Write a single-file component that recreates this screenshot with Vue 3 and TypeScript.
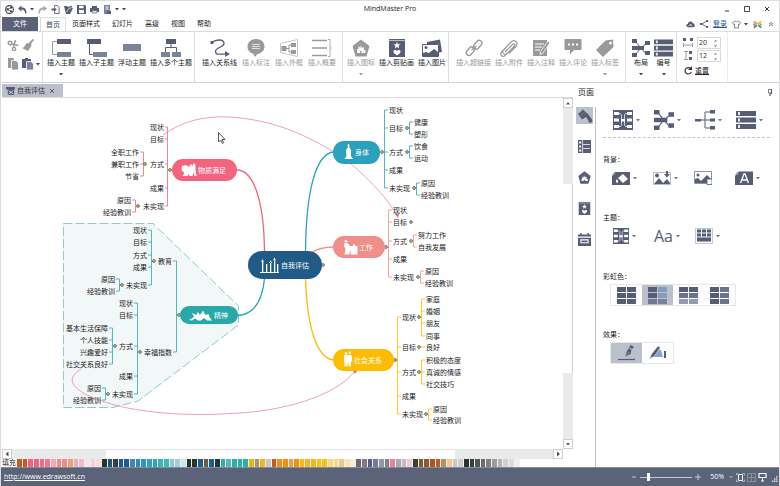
<script setup lang="ts">
import { ref } from 'vue'

interface RibbonItem { icon: string; label: string; w: number; off?: boolean; caret?: boolean }
interface Branch {
  color: string
  dot: [number, number]
  trunk: number
  text: number
  items: [string, number][]
}

const menus = ['页面样式', '幻灯片', '高级', '视图', '帮助']

const groups: { id: string; items: RibbonItem[] }[] = [
  { id: 'topic', items: [
    { icon: 'topic', label: '插入主题', w: 21, caret: true },
    { icon: 'subtopic', label: '插入子主题', w: 20 },
    { icon: 'floating', label: '浮动主题', w: 20 },
    { icon: 'multi', label: '插入多个主题', w: 20 },
  ] },
  { id: 'mark', items: [
    { icon: 'relation', label: '插入关系线', w: 20 },
    { icon: 'callout', label: '插入标注', w: 18, off: true },
    { icon: 'boundary', label: '插入外框', w: 18, off: true },
    { icon: 'summary', label: '插入概要', w: 20, off: true },
  ] },
  { id: 'image', items: [
    { icon: 'marker', label: '插入图标', w: 18, off: true, caret: true },
    { icon: 'clipart', label: '插入剪贴画', w: 18 },
    { icon: 'picture', label: '插入图片', w: 20 },
  ] },
  { id: 'attach', items: [
    { icon: 'link', label: '插入超链接', w: 18, off: true },
    { icon: 'clip', label: '插入附件', w: 18, off: true },
    { icon: 'note', label: '插入注释', w: 18, off: true },
    { icon: 'review', label: '插入评论', w: 18, off: true },
    { icon: 'tag', label: '插入标签', w: 18, off: true, caret: true },
  ] },
  { id: 'arrange', items: [
    { icon: 'layout', label: '布局', w: 18, caret: true },
    { icon: 'numbering', label: '编号', w: 19, caret: true },
  ] },
]

const hGap = ref(20)
const vGap = ref(12)
const zoom = ref(14)

const PINK = '#f26580'
const TEAL = '#2ba8ab'
const BLUE = '#2ba1be'
const SALMON = '#f08e89'
const GOLD = '#fbbc05'

const branches: Branch[] = [
  { color: PINK, dot: [170, 170], trunk: 167.5, text: 164, items: [['现状', 127], ['目标', 139], ['方式', 164], ['成果', 188], ['未实现', 206]] },
  { color: PINK, dot: [145, 164], trunk: 143.5, text: 139, items: [['全职工作', 152], ['兼职工作', 164], ['节省', 176]] },
  { color: PINK, dot: [138, 206], trunk: 135.5, text: 131, items: [['原因', 200], ['经验教训', 212]] },
  { color: TEAL, dot: [179, 315], trunk: 176.5, text: 172, items: [['教育', 261], ['幸福指数', 352]] },
  { color: TEAL, dot: [154, 261], trunk: 151.5, text: 147, items: [['现状', 230], ['目标', 242], ['方式', 255], ['成果', 267], ['未实现', 285]] },
  { color: TEAL, dot: [122, 285], trunk: 119.5, text: 115, items: [['原因', 279], ['经验教训', 291]] },
  { color: TEAL, dot: [140, 352], trunk: 137.5, text: 133, items: [['现状', 303], ['目标', 315], ['方式', 346], ['成果', 376], ['未实现', 394]] },
  { color: TEAL, dot: [115, 346], trunk: 112.5, text: 108, items: [['基本生活保障', 328], ['个人技能', 340], ['兴趣爱好', 352], ['社交关系良好', 364]] },
  { color: TEAL, dot: [108, 394], trunk: 105.5, text: 101, items: [['原因', 388], ['经验教训', 400]] },
  { color: BLUE, dot: [382, 152], trunk: 384.5, text: 389, items: [['现状', 110], ['目标', 128], ['方式', 152], ['成果', 170], ['未实现', 188]] },
  { color: BLUE, dot: [407, 128], trunk: 409.5, text: 414, items: [['健康', 122], ['塑形', 134]] },
  { color: BLUE, dot: [407, 152], trunk: 409.5, text: 414, items: [['饮食', 146], ['运动', 158]] },
  { color: BLUE, dot: [414, 188], trunk: 416.5, text: 421, items: [['原因', 183], ['经验教训', 195]] },
  { color: SALMON, dot: [386, 247], trunk: 388.5, text: 393, items: [['现状', 210], ['目标', 222], ['方式', 241], ['成果', 259], ['未实现', 277]] },
  { color: SALMON, dot: [411, 241], trunk: 413.5, text: 418, items: [['努力工作', 235], ['自我发展', 247]] },
  { color: SALMON, dot: [418, 277], trunk: 420.5, text: 425, items: [['原因', 271], ['经验教训', 283]] },
  { color: GOLD, dot: [395, 360], trunk: 397.5, text: 402, items: [['现状', 317], ['目标', 347], ['方式', 372], ['成果', 396], ['未实现', 414]] },
  { color: GOLD, dot: [419, 317], trunk: 421.5, text: 426, items: [['家庭', 299], ['婚姻', 311], ['朋友', 323], ['同事', 336]] },
  { color: GOLD, dot: [419, 347], trunk: 421.5, text: 426, items: [['良好', 347]] },
  { color: GOLD, dot: [419, 372], trunk: 421.5, text: 426, items: [['积极的态度', 360], ['真诚的情感', 372], ['社交技巧', 384]] },
  { color: GOLD, dot: [426, 414], trunk: 428.5, text: 433, items: [['原因', 409], ['经验教训', 420]] },
]

function wires(b: Branch): string {
  const dir = b.text > b.trunk ? 1 : -1
  const ys = b.items.map(i => i[1])
  const top = Math.min(...ys, b.dot[1])
  const bottom = Math.max(...ys, b.dot[1])
  const stubs = ys.map(y => `M${b.trunk} ${y}H${b.text - dir}`).join('')
  return `M${b.trunk} ${top}V${bottom}M${b.dot[0]} ${b.dot[1]}H${b.trunk}${stubs}`
}

const swatches = ('c85a1e c85a1e f0647d f0647d ef6a85 ef7593 f3aab3 f08c82 f08c82 eda07e f5a9b8 f2b8cc e9e9e9 f5d0d6 f3dcda '
  + '24362f 1f5378 3a3c48 1f5b8c 1f5b8c 3f88b5 3a86b4 1f9cc4 3a9dc6 2aa3bd 36b4b9 3bb8ba 8fc8d4 a2cfd8 cce8ed '
  + '24362f 24362f 1c5f8c 6b6038 1c5f8c 24382f 28b0ab 58bab6 28b0ab 28b0ab 28b0ab e8b80c a89868 f0b428 c8c8c0 '
  + 'c8581e f09010 f09010 eda048 f09010 fcb808 f0b828 f0b828 fcc008 fcc008 fad880 fad888 eec890 fce4a8 fbead0 '
  + '6a6a72 857880 5c5c84 74789c 9498a4 808080 f08098 a8a8b0 c0bcc8 f4c8d8 404030 7c6030 945830 b05428 c8581e '
  + 'b09468 f4c890 c8c8c8 d0d0c8 24362f 3c3c40 505850 6a6a72 808080 9c9c9c b4b4b4 d0d0cc dcdedc eef0ee').split(' ')

const railTabs = [
  { icon: 'brush', name: '页面' },
  { icon: 'outline', name: '大纲' },
  { icon: 'marker', name: '图标' },
  { icon: 'clipart', name: '剪贴画' },
  { icon: 'calendar', name: '任务' },
]

const sections = [
  { title: '', cls: 'first', items: [['theme', 20, 1], ['layout', 20, 1], ['tree', 20, 1], ['numbering', 20, 1]] },
  { title: '背景：', cls: 'back', items: [['bgfill', 18, 1], ['bgpic', 18, 1], ['bgdel', 18, 0], ['watermark', 18, 1]] },
  { title: '主题：', cls: 'look', items: [['theme', 16, 1], ['fonts', 18, 1], ['colors', 18, 1]] },
] as { title: string; cls: string; items: [string, number, number][] }[]

const rainbow = [
  ['#565d75', '#565d75', '#565d75', '#565d75', '#565d75', '#565d75'],
  ['#565d75', '#879cbc', '#565d75', '#879cbc', '#707895', '#7a8296'],
  ['#565d75', '#565d75', '#6c7390', '#6c7390', '#909bb8', '#909bb8'],
  ['#565d75', '#6c7390', '#565d75', '#6c7390', '#565d75', '#6c7390'],
]
</script>

<template>
  <svg class="sprite" aria-hidden="true">
    <symbol id="topic" viewBox="0 0 21 18"><path d="M6 2.500H1.500V15.500H6" fill="none" stroke="#9a9da6" /><path d="M6 0h14v5H6z" fill="#565d75" /><path d="M6 13h14v5H6z" fill="#7a839c" /></symbol>
    <symbol id="subtopic" viewBox="0 0 20 18"><path d="M2.500 5V15.500H6" fill="none" stroke="#565d75" /><path d="M0 0h14v5H0z" fill="#565d75" /><path d="M6 13h14v5H6z" fill="#7a839c" /></symbol>
    <symbol id="floating" viewBox="0 0 20 18"><path d="M1 5h18v7H1z" fill="#7a839c" /></symbol>
    <symbol id="multi" viewBox="0 0 20 18"><path d="M10 5V8.500M4.500 13V8.500H15.500V13" fill="none" stroke="#565d75" /><path d="M5 0h10v5H5z" fill="#565d75" /><path d="M0 13h9v5H0zM11 13h9v5h-9z" fill="#7a839c" /></symbol>
    <symbol id="relation" viewBox="0 0 20 18"><circle cx="2" cy="3.500" r="1.700" fill="#565d75" /><path d="M2 3.500C6 0 14 0 14 4.500C14 8.500 5.500 8 5.500 12.500C5.500 17 12 14.500 17 15" fill="none" stroke="#565d75" stroke-width="1.300" /><path d="M15 12l5 3-5 3z" fill="#565d75" /></symbol>
    <symbol id="callout" viewBox="0 0 18 18"><path d="M9 0C14 0 17.500 3 17.500 7.500S14 14.500 10.500 15L8 18L6 14.500C3 14 .5 11.500 .5 7.500S4 0 9 0z" fill="#98999b" /><path d="M5 5.500h8M5 7.500h8M5 9.500h8" stroke="#fff" stroke-width=".7" /></symbol>
    <symbol id="boundary" viewBox="0 0 18 18"><path d="M.5 4.500L17.500 .5V17.500L.5 13.500z" fill="none" stroke="#c3c4c6" /><path d="M1.500 7h5v5h-5zM11 4h5v4h-5zM11 11h5v4h-5z" fill="#98999b" /><path d="M6 9.500H9M11 6H9V13H11" fill="none" stroke="#98999b" /></symbol>
    <symbol id="summary" viewBox="0 0 20 18"><path d="M0 1.500H15M0 9H15M0 16.500H15" stroke="#98999b" stroke-width="1.500" /><path d="M16 .5h2V8l1.500 1L18 10v7.500h-2" fill="none" stroke="#98999b" stroke-width=".8" /></symbol>
    <symbol id="marker" viewBox="0 0 18 18"><path d="M9 .5L17.500 7L14.500 17.500H3.500L.5 7z" fill="currentColor" /><path d="M5 14V10h1.500v-3l2 2V6l1.500 3l2-1v3h1.500v3z" fill="#fff" /><path d="M8 14v-2h1.500v2z" fill="currentColor" /></symbol>
    <symbol id="clipart" viewBox="0 0 18 18"><path d="M1 0h16v18H1z" fill="currentColor" /><path d="M1 1.500h16" stroke="#fff" stroke-width=".6" /><path d="M9 3l1 2.200 2.500.2-2 1.600.7 2.400L9 8.100 6.800 9.400l.7-2.400-2-1.600 2.500-.2zM9 16.500c-2-1.200-3.500-2.200-3.500-4 0-1.600 2.500-2 3.500-.4 1-1.600 3.500-1.200 3.500.4 0 1.800-1.500 2.800-3.500 4z" fill="#fff" /></symbol>
    <symbol id="picture" viewBox="0 0 20 18"><path d="M5 3L18 .5L20 13L17 13.500V5H5z" fill="#565d75" /><path d="M.5 5.500H16.500V17.500H.5z" fill="#fff" stroke="#565d75" /><circle cx="4" cy="8.500" r="1.500" fill="#565d75" /><path d="M1 17v-3l3-1 3 1 5-4 4 3v4z" fill="#565d75" /></symbol>
    <symbol id="link" viewBox="0 0 18 18"><g fill="none" stroke="#98999b" stroke-width="1.400"><rect x="8" y="3" width="9.500" height="5.500" rx="2.700" transform="rotate(-50 12.700 5.700)" /><rect x=".5" y="9.500" width="9.500" height="5.500" rx="2.700" transform="rotate(-50 5.200 12.200)" /><path d="M6.500 11l5-4" /></g></symbol>
    <symbol id="clip" viewBox="0 0 18 18"><path d="M5 13L12.500 5.500c1.500-1.500 3 .5 1.800 1.800L7 14.500c-2.500 2.500-6-1-3.500-3.500L11 3c3.500-3.500 8 1 4.800 4.500L9 14.500M3.500 11L1.500 13c-2 3 .5 5 3 4l2.500-2.500" fill="none" stroke="#98999b" stroke-width="1.200" /></symbol>
    <symbol id="note" viewBox="0 0 18 18"><path d="M1 1h14v16H1z" fill="#98999b" /><path d="M3 5h9M3 8h7M3 11h5" stroke="#fff" /><path d="M16 2l2 1.500-7 10.500-3 1.500.5-3z" fill="#98999b" stroke="#fff" stroke-width=".8" /></symbol>
    <symbol id="review" viewBox="0 0 18 18"><path d="M1.500 0h15q1 0 1 1v9q0 1-1 1H10L6 15.500V11H1.500q-1 0-1-1V1q0-1 1-1z" fill="#98999b" /><path d="M4 4.500h2v2H4zM8 4.500h2v2H8zM12 4.500h2v2h-2z" fill="#fff" /></symbol>
    <symbol id="tag" viewBox="0 0 18 18"><path d="M9.500 1.500L17 .5L17.500 8L7 18L0 11z" fill="#98999b" /><circle cx="14.500" cy="4" r="1.500" fill="#fff" /></symbol>
    <symbol id="layout" viewBox="0 0 18 18"><path d="M3 2L15 16M15 4L9 9H5M3 16L9 9" fill="none" stroke="#565d75" /><path d="M0 0h5v4H0zM0 7h6v4H0zM0 14h5v4H0zM13 2h5v4h-5zM13 12h5v4h-5zM6 7h6v4H6z" fill="#565d75" /></symbol>
    <symbol id="numbering" viewBox="0 0 20 18"><path d="M0 0h20v5H0zM0 6.500h20v5H0zM0 13h20v5H0z" fill="#565d75" /><path d="M2 1h2v3H2zM2 7.500h2v3H2zM2 14h2v3H2z" fill="#e6e8ee" /></symbol>
    <symbol id="theme" viewBox="0 0 20 20"><path d="M0 0h20v20H0z" fill="#565d75" /><path d="M1 2h5v3H1zM1 8.500h5v3H1zM1 15h5v3H1zM14 2h5v3h-5zM14 8.500h5v3h-5zM14 15h5v3h-5zM8 9h4v2.500H8z" fill="#fff" /><path d="M6 3.500c3 0 2.500 1 2.500 6.500s.5 6.500-2.500 6.500M14 3.500c-3 0-2.500 1-2.500 6.500s-.5 6.500 2.500 6.500" fill="none" stroke="#fff" stroke-width=".8" /></symbol>
    <symbol id="tree" viewBox="0 0 20 20"><path d="M5 10H15M15 2H10V18H15" fill="none" stroke="#565d75" /><path d="M0 9h6v2.500H0zM15 0h5v3.500h-5zM15 8.500h5v3h-5zM15 16h5v3.500h-5z" fill="#565d75" /></symbol>
    <symbol id="bgfill" viewBox="0 0 18 14"><path d="M3.500 1H18V14H0V5z" fill="#565d75" /><path d="M0 4L3 0.500V4z" fill="#8d93a5" /><path d="M6 7l5-4 5 5-5 4z" fill="#fff" /><path d="M5 8q-2 2-.5 3.500T6 10z" fill="#fff" /></symbol>
    <symbol id="bgpic" viewBox="0 0 18 14"><path d="M.5 1.500H17.500V13.500H.5z" fill="none" stroke="#b8bcc8" /><circle cx="4" cy="4.500" r="2" fill="#565d75" /><path d="M1 13l5-6 4 5 4-4 3 4v1z" fill="#565d75" /><path d="M13 0v3h-2l3 3.500L17 3h-2V0z" fill="#565d75" /></symbol>
    <symbol id="bgdel" viewBox="0 0 18 14"><path d="M.5 .5H17.500V12.500H.5z" fill="#fff" stroke="#8d93a5" /><circle cx="4" cy="4" r="1.500" fill="#565d75" /><path d="M1 12V8l3-1 3 3 6-6 4 4v4z" fill="#565d75" /><path d="M13 8h5v5.500h-5z" fill="#fff" stroke="#565d75" stroke-width=".8" /></symbol>
    <symbol id="watermark" viewBox="0 0 18 14"><path d="M4 .5H18V14H0V5z" fill="#565d75" /><path d="M0 4L3.500 0V4z" fill="#8d93a5" /><path d="M5.500 12l3.500-9h1l3.500 9M7 9h5" fill="none" stroke="#fff" stroke-width="1.300" /></symbol>
    <symbol id="colors" viewBox="0 0 18 16"><path d="M.5 .5H17.500V15.500H.5z" fill="#f4f5f7" stroke="#c5c8d0" /><path d="M2 1.500h4v3H2zM7 1.500h4v3H7zM12 1.500h4v3h-4zM2 5.500h4v3H2zM7 5.500h4v3H7zM12 5.500h4v3h-4zM2 9.500h14v4H2z" fill="#565d75" /></symbol>
    <symbol id="brush" viewBox="0 0 16 16"><path d="M1 6L6 1.500L11 6L9 9L5 11.500zM9 8.500l2-2.500 4.500 6-1 2.500-2 .5z" fill="#565d75" /><path d="M3 8l5-4.500" stroke="#7a839c" stroke-width=".8" /></symbol>
    <symbol id="outline" viewBox="0 0 18 18"><path d="M0 0h18v18H0z" fill="#565d75" /><path d="M1.500 2h3v3h-3zM1.500 7.500h3v3h-3zM1.500 13h3v3h-3zM6.500 5.500h10v1h-10zM6.500 11.500h10v1h-10zM6 0h1v18H6z" fill="#fff" /></symbol>
    <symbol id="calendar" viewBox="0 0 18 18"><path d="M0 6.500h18V18H0zM0 2h3V0h2v2h8V0h2v2h3v3H0z" fill="#565d75" /><path d="M4 9.500h10v4H4z" fill="none" stroke="#fff" stroke-width="1.500" /></symbol>
    <symbol id="scissors" viewBox="0 0 12 12"><g fill="none" stroke="#98999b" stroke-width="1.400"><circle cx="3" cy="4" r="1.800" /><circle cx="7" cy="10" r="1.600" /><path d="M4.500 5L11.500 6.500M6.500 8.500L8.500 1" /></g></symbol>
    <symbol id="painter" viewBox="0 0 12 12"><path d="M10.500 0l1.500 1-3 4 .5 1.500L6 12 0 9c2-.5 3.500-2 4-4.500l3-.5z" fill="#98999b" /></symbol>
    <symbol id="copy" viewBox="0 0 12 12"><path d="M1 0h5l1 1v9H1z" fill="#98999b" /><path d="M4.500 2.500H9l2.500 2.500V12h-7z" fill="#98999b" stroke="#fff" stroke-width=".8" /></symbol>
    <symbol id="paste" viewBox="0 0 12 12"><path d="M0 1h3V0h3v1h3v9H0z" fill="#565d75" /><path d="M4.500 3.500H9L11.500 6v6h-7z" fill="#7a839c" stroke="#fff" stroke-width=".8" /></symbol>
    <symbol id="caret" viewBox="0 0 4 3"><path d="M0 0h4L2 2.500z" fill="currentColor" /></symbol>
    <symbol id="logo" viewBox="0 0 9 9"><circle cx="4.500" cy="4.500" r="3.900" fill="#fff" stroke="#3d4252" stroke-width="1.100" /><path d="M1.500 3.200h2.200v2.400H1.500zM5 1.800h2v1.700H5zM5 5.500h2v1.700H5z" fill="#3d4252" /><path d="M3 4.400l3-1.800M3 4.600l3 1.800" stroke="#3d4252" stroke-width=".6" /></symbol>
    <symbol id="undo" viewBox="0 0 9 9"><path d="M0 3.500L3.500 .5v2C7 2.500 8.500 4 8.500 8.500H7C7 5.500 6 4.500 3.500 4.500v2z" fill="currentColor" /></symbol>
    <symbol id="newdoc" viewBox="0 0 9 10"><path d="M3.500 .5h3l2 2v7h-5V7M3.500 3V.5" fill="none" stroke="#565d75" /><path d="M0 4h3V2.500L6 5 3 7.500V6H0z" fill="#565d75" /></symbol>
    <symbol id="open" viewBox="0 0 9 9"><path d="M0 1h3l1 1 4-1.500-.5 2L9 3 6 9H2z" fill="#565d75" /><path d="M2.500 7l3-4h2" stroke="#fff" stroke-width=".7" fill="none" /></symbol>
    <symbol id="save" viewBox="0 0 9 9"><path d="M0 0h8l1 1v8H0z" fill="#565d75" /><path d="M2 .8h4.500v2.500H2zM2 5h5v3.200H2z" fill="#fff" /></symbol>
    <symbol id="print" viewBox="0 0 9 9"><path d="M2 1h5v2h2v4H0V3h2z" fill="#565d75" /><path d="M2 5.500h5v2.500H2z" fill="#dfe1e8" stroke="#565d75" stroke-width=".6" /></symbol>
    <symbol id="export" viewBox="0 0 9 9"><path d="M1 0h6v9H1z" fill="#7a839c" /><path d="M2.500 2h3M2.500 4h3" stroke="#fff" /><path d="M4 6h4v3H4z" fill="#565d75" /></symbol>
    <symbol id="cloud" viewBox="0 0 10 8"><path d="M2.500 7C0 7-.5 4 2 3.500 2.500 0 7 0 7.500 2.500 10.500 3 10.500 7 8 7z" fill="#565d75" /><path d="M3 5h2V3.500L7 6" stroke="#fff" fill="none" stroke-width=".7" /></symbol>
    <symbol id="share" viewBox="0 0 8 8"><path d="M7 1L1.500 4L7 7" fill="none" stroke="#565d75" stroke-width=".9" /><path d="M6 0h2v2H6zM0 3h2v2H0zM6 6h2v2H6z" fill="#565d75" /></symbol>
    <symbol id="shirt" viewBox="0 0 9 8"><path d="M3 .5L.5 2l1 2 1-.5v4h4v-4l1 .5 1-2L6 .5Q4.500 2 3 .5z" fill="none" stroke="#565d75" stroke-width=".7" /></symbol>
    <symbol id="flower" viewBox="0 0 9 9"><g stroke-width="2.200" stroke-linecap="round"><path d="M4.500 4.500L1.500 2" stroke="#f5a623" /><path d="M4.500 4.500L7.500 2" stroke="#f5c623" /><path d="M4.500 4.500L1.500 7" stroke="#e94f64" /><path d="M4.500 4.500L7.500 7" stroke="#29a8d8" /><path d="M1.200 4.500h.1" stroke="#29b8b0" /><path d="M7.700 4.500h.1" stroke="#f08030" /></g><circle cx="4.500" cy="4.500" r="1" fill="#fff" /></symbol>
    <symbol id="doc" viewBox="0 0 10 10"><path d="M0 1h10v3H0zM2 4h7v6H2z" fill="#565d75" /><path d="M3 5l5 4M8 5L3 9" stroke="#fff" stroke-width=".8" /></symbol>
    <symbol id="pen" viewBox="0 0 18 16"><path d="M13 0l3 2-2 2-3-2zM11 3l2.500 2-1 4L7 12l2-6z" fill="#565d75" /><path d="M7 12l4-5" stroke="#bcc0cc" stroke-width=".6" /><path d="M0 14.500h17" stroke="#565d75" stroke-width="1.200" /></symbol>
    <symbol id="sketch" viewBox="0 0 18 16"><path d="M3 12C4 7 8 4 12 5l2 7z" fill="#86a5c8" /><path d="M9 1l2.500 1.500L5.500 11l-5 3 2-5z" fill="#565d75" stroke="#fff" stroke-width=".5" /><path d="M15 6h2v7h-2z" fill="#565d75" /></symbol>
  </svg>

  <div class="window">
    <header class="title">
      <div class="quick">
        <svg class="i9"><use href="#logo" /></svg>
        <button type="button" aria-label="撤销" class="pair"><svg class="i9"><use href="#undo" /></svg><svg class="caret"><use href="#caret" /></svg></button>
        <button type="button" aria-label="恢复" class="grey flip"><svg class="i9"><use href="#undo" /></svg></button>
        <button v-for="n in ['newdoc', 'open', 'save', 'print']" :key="n" type="button" :aria-label="n"><svg class="i9"><use :href="'#' + n" /></svg></button>
        <button type="button" aria-label="导出" class="pair"><svg class="i9"><use href="#export" /></svg><svg class="caret"><use href="#caret" /></svg><svg class="caret"><use href="#caret" /></svg></button>
      </div>
      <h1>MindMaster Pro</h1>
      <div class="winbtns">
        <button type="button" aria-label="最小化"><svg viewBox="0 0 6 6"><path d="M1 5h4" stroke="#333" /></svg></button>
        <button type="button" aria-label="最大化"><svg viewBox="0 0 6 6"><path d="M.5 .5h5v5h-5z" fill="none" stroke="#444" /></svg></button>
        <button type="button" aria-label="关闭"><svg viewBox="0 0 6 6"><path d="M1 1l4 4M5 1L1 5" stroke="#333" /></svg></button>
      </div>
    </header>

    <nav class="menu">
      <button type="button" class="file">文件</button>
      <button type="button" class="on">首页</button>
      <button v-for="m in menus" :key="m" type="button">{{ m }}</button>
      <div class="account">
        <svg class="i9"><use href="#cloud" /></svg>
        <svg class="i8"><use href="#share" /></svg>
        <a href="#login">登录</a>
        <span class="pair"><svg class="i9"><use href="#shirt" /></svg><svg class="caret"><use href="#caret" /></svg></span>
        <svg class="i9"><use href="#flower" /></svg>
        <svg class="i8" viewBox="0 0 8 8"><path d="M2 4l2-1.500L6 4M2 6l2-1.500L6 6" fill="none" stroke="#565d75" stroke-width=".8" /></svg>
      </div>
    </nav>

    <section class="ribbon">
      <div class="clipboard">
        <button type="button" aria-label="剪切"><svg><use href="#scissors" /></svg></button>
        <button type="button" aria-label="格式刷"><svg><use href="#painter" /></svg></button>
        <button type="button" aria-label="复制"><svg><use href="#copy" /></svg></button>
        <button type="button" aria-label="粘贴" class="pair"><svg><use href="#paste" /></svg><svg class="caret"><use href="#caret" /></svg></button>
      </div>
      <div v-for="g in groups" :key="g.id" class="group" :class="g.id">
        <button v-for="i in g.items" :key="i.label" type="button" :class="{ off: i.off }">
          <svg class="big" :width="i.w"><use :href="'#' + i.icon" /></svg>
          <span>{{ i.label }}</span>
          <svg v-if="i.caret" class="caret"><use href="#caret" /></svg>
        </button>
      </div>
      <div class="spacing">
        <label>
          <svg viewBox="0 0 10 10"><path d="M0 0h3v3H0zM7 0h3v3H7z" fill="#565d75" /><path d="M.5 5v4M9.500 5v4M1 7h8" stroke="#9a9da6" /></svg>
          <span class="spin"><input v-model="hGap" type="text" aria-label="水平间距"><svg viewBox="0 0 5 9"><path d="M1 2.500L2.500 1L4 2.500zM1 6.500L2.500 8L4 6.500z" fill="#666" /></svg></span>
        </label>
        <label>
          <svg viewBox="0 0 10 10"><path d="M6 0h3v3H6zM6 6h3v3H6z" fill="#565d75" /><path d="M1 .5h4M1 8.500h4M3 1v7" stroke="#9a9da6" /></svg>
          <span class="spin"><input v-model="vGap" type="text" aria-label="垂直间距"><svg viewBox="0 0 5 9"><path d="M1 2.500L2.500 1L4 2.500zM1 6.500L2.500 8L4 6.500z" fill="#666" /></svg></span>
        </label>
        <button type="button" class="reset"><svg viewBox="0 0 10 10"><path d="M7.500 2.500A3.200 3.200 0 1 0 8.200 6" fill="none" stroke="#333" stroke-width="1.200" /><path d="M9 0v4H5z" fill="#333" /></svg><u>重置</u></button>
      </div>
    </section>

    <main>
      <div class="editor">
        <div class="tabs">
          <div class="tab"><svg class="i9"><use href="#doc" /></svg><span>自我评估</span><button type="button" aria-label="关闭标签"><svg viewBox="0 0 6 6"><path d="M1 1l4 4M5 1L1 5" stroke="#555" stroke-width=".9" /></svg></button></div>
        </div>
        <div class="stage">
          <div class="canvas">
            <svg class="map" width="560" height="351" viewBox="2 98 560 351">
              <path d="M63.500 223.500H153L238.500 306V325L138 401L113 407.500H63.500z" fill="#f2f7f8" stroke="#7fc3cb" stroke-dasharray="9 3" stroke-width=".9" />
              <g fill="none" stroke-width="1.300">
                <path d="M264.500 252C264 196 252 170 237 170" :stroke="PINK" />
                <path d="M305.500 252C306 190 316 153 334 152" :stroke="BLUE" />
                <path d="M311 253C318 248 325 247 334 247" :stroke="SALMON" />
                <path d="M305.500 278C307 325 316 359 334 360" :stroke="GOLD" />
                <path d="M264.500 278C262 305 252 315 237 315.500" :stroke="TEAL" />
              </g>
              <g fill="none" stroke="#ea86a8" stroke-width=".8">
                <path d="M163 135C196 111 235 115 268 123C300 131 333 150 350 163C370 180 389 200 397 216" />
                <path d="M355 371C335 397 280 412 230 413.500C180 417 130 411 105 402C80 394 60 382 81 369" />
              </g>
              <path d="M395 214l4 0-1 4zM353 371h4l-2 3z" fill="#e0668f" />

              <g v-for="(b, n) in branches" :key="n">
                <path :d="wires(b)" :stroke="b.color" fill="none" stroke-width=".8" />
                <circle :cx="b.dot[0]" :cy="b.dot[1]" r="1.400" fill="#c9c79c" stroke="#5b5a3c" stroke-width=".8" />
                <text v-for="([t, y], k) in b.items" :key="k" :x="b.text" :y="y + 3" :text-anchor="b.text > b.trunk ? 'start' : 'end'">{{ t }}</text>
              </g>
              <g fill="#c9c79c" stroke="#5b5a3c" stroke-width=".8"><circle cx="411" cy="222" r="1.400" /><circle cx="323" cy="265" r="1.400" /></g>

              <rect x="172" y="159" width="65" height="22" rx="11" fill="#f5647f" />
              <rect x="180" y="306" width="58" height="18" rx="9" fill="#28a8a8" />
              <rect x="333" y="141" width="47" height="23" rx="11" fill="#2ba1be" />
              <rect x="333" y="236" width="52" height="22" rx="11" fill="#f08e89" />
              <rect x="333" y="349" width="61" height="22" rx="11" fill="#fcbc03" />
              <rect x="248" y="251" width="74" height="28" rx="14" fill="#1f5b86" />
              <g class="lit">
                <text x="198" y="173">物质满足</text>
                <text x="214" y="318">精神</text>
                <text x="355" y="155">身体</text>
                <text x="359" y="250">工作</text>
                <text x="354" y="363">社会关系</text>
                <text x="281" y="268">自我评估</text>
              </g>
              <g fill="#fff">
                <path d="M182 166l4-1 3 2 2-3 1.500 2 1-3 2 2v5l1 6h-2l-1-4-1 4h-3l-1-2-1 2h-5l2-3-3-3z" />
                <path d="M189 320l5-3-2-4 4 2 2-3 2 3 3-4.500 2.500 4.500 3-1 1 3 2.500 3.500h-5l-3-2.500-3 2.500h-3l-3-2-3 2z" />
                <path d="M348.500 144l1 1-.3 2 1.800 3v6l2 3h-8.500l2-3-.5-6 2-3-.5-2z" />
                <circle cx="346" cy="241.300" r="1.300" />
                <path d="M344.500 243h3l2.500 3h3v-1.500h2V246h2.500v8.500h-7V250l-1.500 4.500h-4.500l1-6.500-1.500-1z" />
                <circle cx="346" cy="353.500" r="1.200" /><circle cx="349.800" cy="352.800" r="1.200" />
                <path d="M344 355h7.500l.8 6h-1l-.6 5.500h-2l-.6-5-.8 5h-2.800v-5l-.5-1z" />
                <path d="M260 272h19v1h-19zM262 262h1.300v10h-1.300zM266 264h1.300v8h-1.300zM270 262h1.300v10h-1.300zM274 260h1.300v12h-1.300zM277 264h1.300v8h-1.300zM261 262h3l-1.500-3zM269 263h3.500l-1.800-2.500zM273 260.500h3l-1.500-3z" />
              </g>
              <path d="M218.500 132.500V142l2-2 2 3.500 1-.5-1.500-3.500H225z" fill="#fff" stroke="#333" stroke-width=".8" />
            </svg>
          </div>
          <div class="bar vert">
            <i class="btn"><svg viewBox="0 0 8 8"><path d="M2 5.500L4 3L6 5.500z" fill="#555" /></svg></i>
            <i class="track before" /><i class="thumb" /><i class="track after" />
            <i class="btn"><svg viewBox="0 0 8 8"><path d="M2 3L4 5.500L6 3z" fill="#555" /></svg></i>
          </div>
        </div>
        <div class="bar horz">
          <i class="btn"><svg viewBox="0 0 8 8"><path d="M5.500 1.500L2.500 4L5.500 6.500z" fill="#555" /></svg></i>
          <i class="track before" /><i class="thumb" /><i class="track after" />
          <i class="btn"><svg viewBox="0 0 8 8"><path d="M3 1.500L6 4L3 6.500z" fill="#555" /></svg></i>
        </div>
        <div class="palette">
          <span>填充</span>
          <div class="colors"><i v-for="(c, n) in swatches" :key="n" :style="{ background: '#' + c }" /></div>
        </div>
      </div>

      <aside>
        <div class="head"><h2>页面</h2><svg class="i8" viewBox="0 0 8 8"><path d="M2.500 1.500h3v3.500h-3z" fill="none" stroke="#565d75" stroke-width=".8" /><path d="M5.500 1v5M4 5v3" stroke="#565d75" stroke-width="1.200" /></svg></div>
        <div class="side">
          <div class="rail">
            <button v-for="(r, n) in railTabs" :key="r.icon" type="button" :aria-label="r.name" :class="{ on: n === 0 }"><svg><use :href="'#' + r.icon" /></svg></button>
          </div>
          <div class="props">
            <section v-for="s in sections" :key="s.cls" :class="s.cls">
              <h3 v-if="s.title">{{ s.title }}</h3>
              <div class="row">
                <button v-for="[icon, w, drop] in s.items" :key="icon" type="button" :aria-label="icon">
                  <b v-if="icon === 'fonts'">Aa</b>
                  <svg v-else class="tool" :width="w"><use :href="'#' + icon" /></svg>
                  <svg v-if="drop" class="caret"><use href="#caret" /></svg>
                </button>
              </div>
            </section>
            <section class="rainbow">
              <h3>彩虹色：</h3>
              <div class="choices">
                <button v-for="(r, n) in rainbow" :key="n" type="button" :aria-label="'配色 ' + (n + 1)" :class="{ on: n === 1 }">
                  <span class="cells"><i v-for="(c, k) in r" :key="k" :style="{ background: c }" /></span>
                </button>
              </div>
            </section>
            <section class="effect">
              <h3>效果：</h3>
              <div class="choices">
                <button type="button" aria-label="普通" class="on"><svg><use href="#pen" /></svg></button>
                <button type="button" aria-label="手绘"><svg><use href="#sketch" /></svg></button>
              </div>
            </section>
          </div>
        </div>
      </aside>
    </main>

    <footer>
      <a href="http://www.edrawsoft.cn">http://www.edrawsoft.cn</a>
      <div class="zoom">
        <button type="button" aria-label="缩小"><svg viewBox="0 0 6 6"><path d="M1 3h4" stroke="#c5c9d4" /></svg></button>
        <input v-model="zoom" type="range" aria-label="缩放" min="0" max="100">
        <button type="button" aria-label="放大"><svg viewBox="0 0 6 6"><path d="M0 3h6M3 0v6" stroke="#c5c9d4" /></svg></button>
        <output>50%</output>
        <svg class="caret"><use href="#caret" /></svg>
        <div class="views">
          <svg viewBox="0 0 9 9"><path d="M2.500 1.500h4v6h-4z" fill="none" stroke="#fff" /><path d="M.5 2.500v-2h2M6.500 .5h2v2M.5 6.500v2h2M6.500 8.500h2v-2" fill="none" stroke="#c5c9d4" stroke-width=".8" /></svg>
          <svg viewBox="0 0 9 9"><path d="M.5 .5h8v8h-8zM4.500 1v7M1 4.500h7" fill="none" stroke="#8f95a8" stroke-width=".9" /></svg>
          <svg viewBox="0 0 9 9"><path d="M1 .5h7v4H1z" fill="none" stroke="#fff" stroke-width="1.200" /><path d="M4.500 5v3M3 8h3" stroke="#fff" /></svg>
        </div>
        <svg class="grip" viewBox="0 0 6 6"><path d="M4 0h1.500v1.500H4zM4 2.200h1.500v1.500H4zM2 2.200h1.500v1.500H2zM4 4.400h1.500v1.500H4zM2 4.400h1.500v1.500H2zM0 4.400h1.500v1.500H0z" fill="#d5d8e0" /></svg>
      </div>
    </footer>
  </div>
</template>

<style>
body { background: #fff; }
</style>

<style scoped>
.sprite { position: absolute; width: 0; height: 0; }
.window {
  box-sizing: border-box; min-height: 100vh; display: flex; flex-direction: column;
  border: 1px solid #dcdcde; border-bottom: 0; overflow: hidden;
  font: 7px/10px "Noto Sans", "Noto Sans CJK SC", sans-serif; color: #222; background: #fff;
}
button { font: inherit; color: inherit; border: 0; padding: 0; background: none; display: flex; align-items: center; }
svg { display: block; flex: none; }
h1, h2, h3 { margin: 0; font-weight: 400; }
.i9 { width: 9px; height: 9px; }
.i8 { width: 8px; height: 8px; }
.caret { width: 4px; height: 3px; color: #444; }
.pair { display: flex; align-items: center; gap: 3px; }
.title { display: grid; grid-template-columns: 1fr auto 1fr; align-items: center; height: 16px; }
.title h1 { font-size: 7px; line-height: 12px; font-family: "Open Sans", sans-serif; }
.quick { display: flex; gap: 4px; padding-left: 4px; align-items: center; color: #565d75; }
.grey { color: #a9abb2; }
.flip { transform: scaleX(-1); }
.winbtns { display: flex; justify-content: flex-end; gap: 14px; padding-right: 9px; }
.winbtns svg { width: 6px; height: 6px; }
.menu { display: flex; align-items: stretch; height: 14px; padding-left: 1px; }
.menu > button { padding: 0 6px; justify-content: center; }
.menu .file { background: #5b6278; color: #fff; padding: 0 11px; margin-right: 2px; }
.menu .on { border: 1px solid #dcdcde; border-bottom: 0; padding: 0 5px; color: #444b66; }
.account { margin-left: auto; display: flex; align-items: center; gap: 5px; padding-right: 4px; }
.account a { color: #2a5b94; }
.ribbon { display: flex; height: 50px; border-top: 1px solid #dcdcde; border-bottom: 1px solid #d4d4d6; }
.clipboard { display: grid; grid-template-columns: 12px 18px; gap: 7px 3px; padding: 7px 2px 7px 6px; align-content: start; border-right: 1px solid #dfdfe1; }
.clipboard svg:not(.caret) { width: 12px; height: 12px; }
.clipboard .pair { gap: 2px; }
.group { display: flex; border-right: 1px solid #dfdfe1; padding: 7px 2px 0 4px; gap: 4px; }
.group button { flex-direction: column; justify-content: flex-start; white-space: nowrap; }
.group .big { height: 18px; color: #565d75; }
.group span { line-height: 10px; margin-top: 1px; }
.group .caret { margin-top: 5px; }
.group .off, .group .off .caret, .group .off .big { color: #98999b; }
.mark { padding-left: 7px; padding-right: 6px; gap: 5px; }
.attach { padding-left: 7px; padding-right: 6px; }
.arrange { padding: 7px 3px 0 6px; }
.spacing { display: flex; flex-direction: column; align-items: flex-start; padding: 5px 6px; border-right: 1px solid #ececee; gap: 1px; }
.spacing label { display: flex; align-items: center; gap: 4px; }
.spacing label > svg, .reset svg { width: 10px; height: 10px; }
.spin { display: flex; align-items: center; border: 1px solid #d8d9dc; height: 10px; width: 22px; }
.spin input { font: 7px/8px "Noto Sans", sans-serif; color: #333; border: 0; padding: 0 1px; width: 13px; height: 8px; background: none; }
.spin svg { width: 5px; height: 9px; }
.reset { gap: 2px; margin-top: 3px; }
main { flex: 1; display: flex; min-height: 0; }
.editor { flex: 1; min-width: 0; display: flex; flex-direction: column; padding-left: 1px; }
.tabs { padding-top: 1px; display: flex; }
.tab { display: flex; align-items: center; height: 13px; padding: 0 8px 0 4px; gap: 2px; background: #bcc0cc; color: #333; }
.tab button { margin-left: 2px; }
.tab button svg { width: 6px; height: 6px; }
.stage { flex: 1; display: flex; min-height: 0; border-top: 1px solid #dcdcde; }
.canvas { flex: 1; min-width: 0; overflow: hidden; }
.map text { font: 7px "Noto Sans CJK SC", sans-serif; fill: #222; }
.map .lit text { fill: #fff; }
.bar { display: flex; }
.bar i { box-sizing: border-box; }
.bar .btn { flex: none; width: 10px; height: 10px; border: 1px solid #cfcfd2; background: #fff; }
.bar .btn svg { width: 8px; height: 8px; }
.track { background: #e9ebea; }
.thumb { background: #fff; }
.vert { flex-direction: column; width: 10px; }
.vert .before { flex: 76; }
.vert .thumb { flex: 190; border-right: 1px solid #cfcfd2; }
.vert .after { flex: 66; }
.horz { margin-right: 10px; height: 10px; }
.horz .before { flex: 94; }
.horz .thumb { flex: 349; border-top: 1px solid #e3e3e5; }
.horz .after { flex: 98; }
.palette { display: flex; height: 8px; }
.palette span { line-height: 8px; width: 15px; }
.colors { flex: 1; display: flex; padding-right: 52px; }
.colors i { flex: 1; border-right: 1px solid #f0f0f0; }
aside { width: 206px; display: flex; flex-direction: column; }
.head { display: flex; justify-content: space-between; align-items: center; height: 18px; padding: 0 5px; }
.head h2 { font-size: 8px; }
.side { flex: 1; display: flex; padding-top: 6px; }
.rail { flex: none; width: 19px; padding-left: 3px; display: flex; flex-direction: column; gap: 14px; border-right: 1px solid #bfc0c4; }
.rail button { width: 17px; height: 17px; justify-content: center; color: #565d75; }
.rail button svg { width: 13px; height: 13px; }
.rail .on { background: #bcc0cc; }
.rail .on svg { width: 16px; height: 16px; }
.props { flex: 1; min-width: 0; padding: 0 9px 0 7px; }
.props h3 { font-size: 7px; line-height: 10px; }
.row { display: grid; grid-template-columns: repeat(4, 41px); padding-left: 10px; align-items: center; }
.row button { gap: 3px; height: 20px; }
.row .caret { color: #777; }
.row b { font: 16px/20px "Open Sans", sans-serif; color: #565d75; }
.tool { height: 20px; }
.first { padding: 3px 0 7px; border-bottom: 1px dashed #c4c4c8; }
.back { padding-top: 17px; }
.back .row, .look .row { padding-top: 3px; }
.back .row { padding-left: 9px; }
.look { padding-top: 25px; }
.rainbow { padding-top: 26px; }
.effect { padding-top: 24px; }
.choices { display: inline-flex; border: 1px solid #e6e7ea; margin: 2px 0 0 7px; }
.choices button { width: 31px; height: 20px; justify-content: center; }
.choices .on { background: #bcc0cc; }
.choices svg { width: 18px; height: 16px; }
.cells { display: grid; grid-template-columns: 9px 9px; grid-auto-rows: 5px; gap: 1px; }
footer { display: flex; align-items: center; justify-content: space-between; height: 19px; box-sizing: border-box; border-top: 1px solid #858b9c; background: #5b6378; color: #fff; padding: 0 1px 0 3px; }
footer a { color: #fff; font-family: "Open Sans", sans-serif; }
.zoom { display: flex; align-items: center; gap: 3px; }
.zoom button svg { width: 6px; height: 6px; }
.zoom input { appearance: none; width: 52px; height: 8px; margin: 0; background: linear-gradient(#c5c9d4, #c5c9d4) center / 100% 1px no-repeat; }
.zoom input::-webkit-slider-thumb { appearance: none; width: 3px; height: 8px; background: #fff; }
.zoom output { font-family: "Open Sans", sans-serif; padding: 0 2px 0 6px; }
.zoom .caret { color: #9aa0b2; }
.views { display: flex; gap: 2px; }
.views svg { width: 9px; height: 9px; }
.grip { width: 6px; height: 6px; margin-left: 2px; align-self: flex-end; }
</style>
